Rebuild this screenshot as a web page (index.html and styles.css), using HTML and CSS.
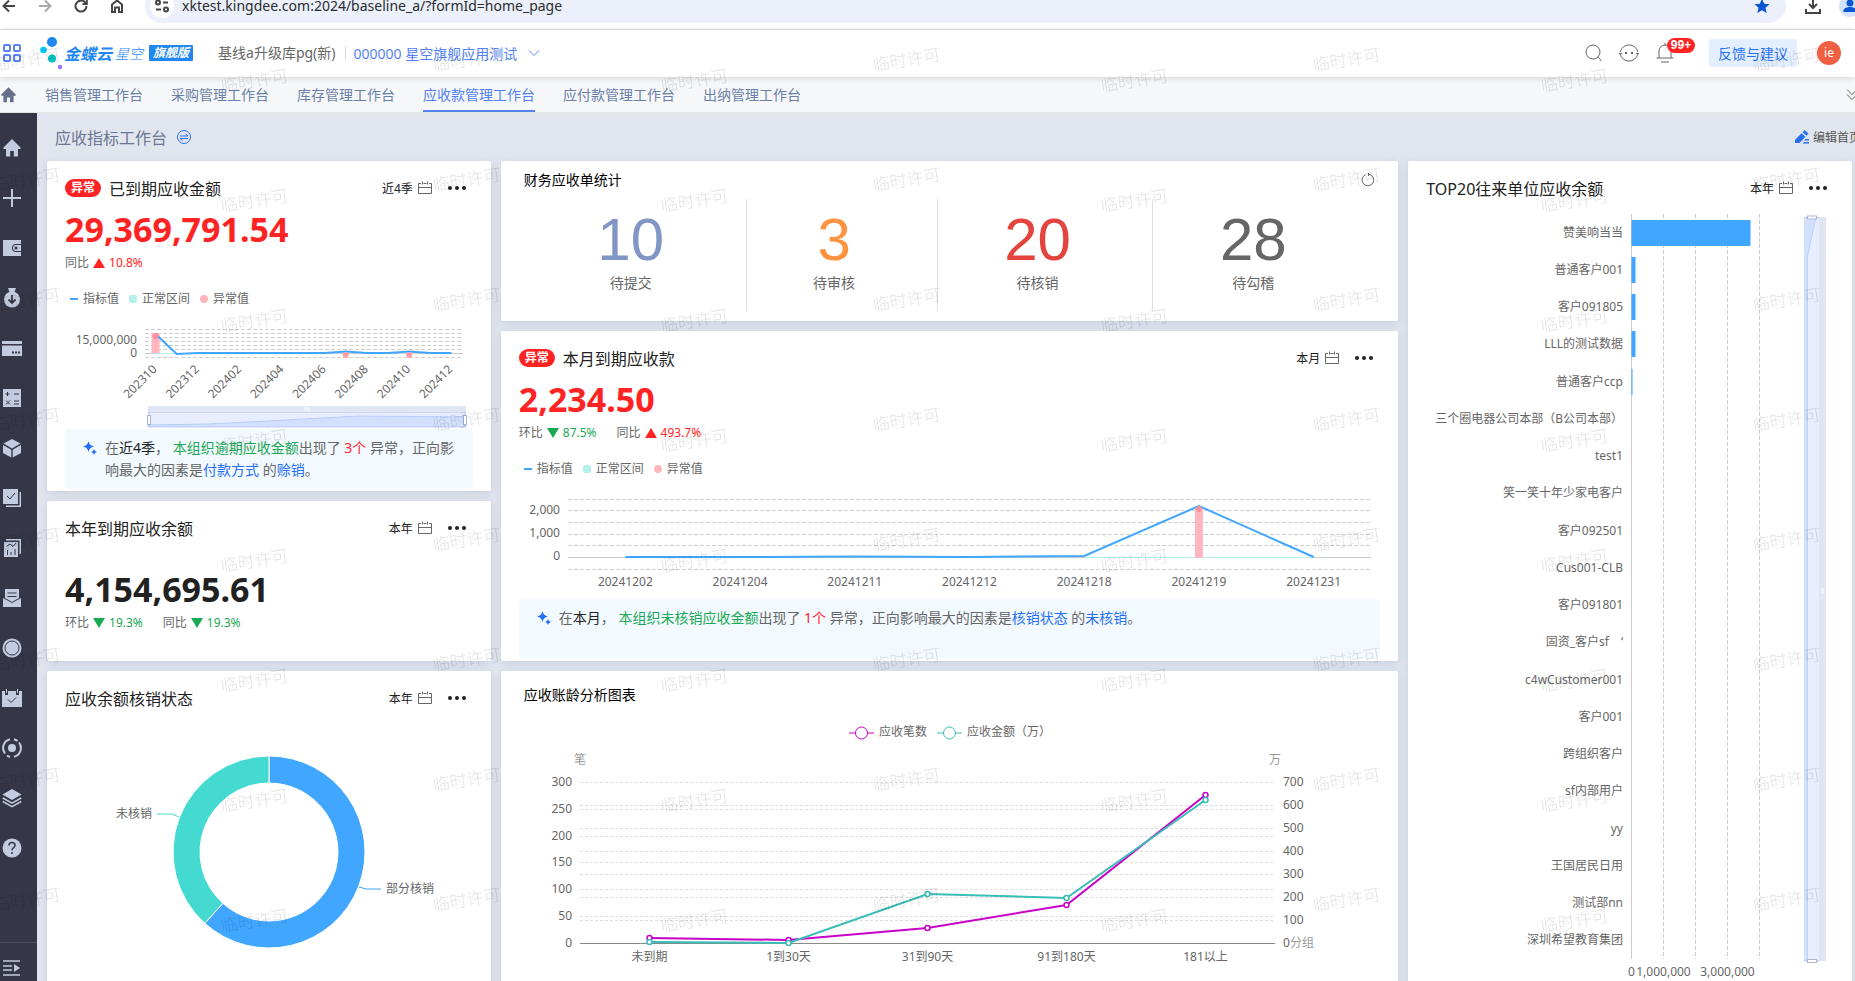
FILE: index.html
```
<!DOCTYPE html>
<html lang="zh-CN">
<head>
  <meta charset="UTF-8">
  <meta name="viewport" content="width=device-width, initial-scale=1.0">
  <title>应收指标工作台</title>
  <link rel="stylesheet" href="styles.css">
</head>
<body>

  <!-- Shared icons -->
  <svg class="sprite" aria-hidden="true">
    <symbol id="i-calendar" viewBox="0 0 14 14">
      <path d="M3 2.500H.5v10h13v-10H11M5.500 2.500h3M.5 6.500h13M4.500 .5v3M9.500 .5v3" fill="none" stroke="currentColor"/>
    </symbol>
    <symbol id="i-more" viewBox="0 0 20 6">
      <circle cx="3" cy="3" r="2"/><circle cx="10" cy="3" r="2"/><circle cx="17" cy="3" r="2"/>
    </symbol>
    <symbol id="i-spark" viewBox="0 0 14 14">
      <path d="M5.500 0Q6.300 4.700 11 5.500Q6.300 6.300 5.500 11Q4.700 6.300 0 5.500Q4.700 4.700 5.500 0zM11 8Q11.500 10.500 14 11Q11.500 11.500 11 14Q10.500 11.500 8 11Q10.500 10.500 11 8z"/>
    </symbol>
    <symbol id="i-home" viewBox="0 0 20 20">
      <path d="M10 1 1.500 9.500V11H4v7.500h4.200V13h3.600v5.500H16V11h2.500V9.500z"/>
    </symbol>
  </svg>

  <!-- Browser bar -->
  <div class="browser">
    <button class="nav-btn" aria-label="后退"><svg viewBox="0 0 16 16"><path d="M14 8H3M8 2.500 2.500 8 8 13.500"/></svg></button>
    <button class="nav-btn off" aria-label="前进"><svg viewBox="0 0 16 16"><path d="M2 8h11M8 2.500 13.500 8 8 13.500"/></svg></button>
    <button class="nav-btn" aria-label="刷新"><svg viewBox="0 0 16 16"><path d="M13.500 8A5.500 5.500 0 1 1 11.800 4.100L13.500 6M13.800 1.500V6H9.500"/></svg></button>
    <button class="nav-btn" aria-label="主页"><svg viewBox="0 0 16 16"><path d="M3 6.500 8 2.500l5 4V14h-3V9.500H6V14H3z"/></svg></button>
    <div class="omnibox">
      <span class="site-info"><svg viewBox="0 0 16 16"><circle cx="4" cy="4.500" r="2"/><path d="M9 4.500h5M2 11.500h5"/><circle cx="12" cy="11.500" r="2"/></svg></span>
      <input class="url" type="text" aria-label="地址栏" value="xktest.kingdee.com:2024/baseline_a/?formId=home_page">
      <svg class="star" viewBox="0 0 16 16"><path d="M8 .8l2.200 4.900 5.300.5-4 3.600 1.200 5.300L8 12.300l-4.700 2.800 1.200-5.300-4-3.600 5.300-.5z"/></svg>
    </div>
    <svg class="download" viewBox="0 0 18 18"><path d="M9 1v10M5 7l4 4 4-4M2 12v4h14v-4"/></svg>
    <svg class="profile" viewBox="0 0 22 22"><circle class="ring" cx="11" cy="11" r="11"/><circle cx="11" cy="8" r="3.500"/><path d="M4.500 17v-1.500c0-2.500 4-3.500 6.500-3.500s6.500 1 6.500 3.500V17z"/></svg>
  </div>

  <!-- App header -->
  <header class="header">
    <button class="apps" aria-label="应用"><svg viewBox="0 0 18 18"><rect x="1" y="1" width="6" height="6" rx="1"/><rect x="11" y="1" width="6" height="6" rx="1"/><rect x="1" y="11" width="6" height="6" rx="1"/><rect x="11" y="11" width="6" height="6" rx="1"/></svg></button>
    <a class="logo" href="#">
      <svg viewBox="0 0 24 34"><circle cx="12" cy="6" r="5" fill="#1f87f0"/><circle cx="3.500" cy="14" r="3.300" fill="#00c8f5"/><circle cx="12" cy="22.500" r="4" fill="#06bfbf"/><circle cx="20" cy="31" r="2.200" fill="#a06cff"/></svg>
      <b>金蝶云</b><i>星空</i><em><span>旗舰版</span></em>
    </a>
    <span class="org">基线a升级库pg(新)</span>
    <button class="account">000000 星空旗舰应用测试<svg viewBox="0 0 12 8"><path d="M1 1.500l5 5 5-5"/></svg></button>
    <div class="tools">
      <button aria-label="搜索"><svg viewBox="0 0 20 20"><circle cx="10" cy="9" r="7"/><path d="M15 14l3.500 4"/></svg></button>
      <button aria-label="消息"><svg viewBox="0 0 20 20"><path d="M1.200 9a9 9 0 0 1 17.600 0M18.800 11a9 9 0 0 1-17.600 0M0 10.500h3M17 10.500h3"/><path d="M6 10h2M12 10h2" stroke-width="2"/></svg></button>
      <button class="bell" aria-label="通知"><svg viewBox="0 0 20 20"><path d="M1.500 15h17M4 15V8a6 6 0 0 1 12 0v7M6 19h8M10 2V0"/></svg><span class="count">99+</span></button>
      <button class="feedback">反馈与建议</button>
      <span class="avatar">ie</span>
    </div>
  </header>

  <!-- Workbench tabs -->
  <nav class="tabs">
    <a class="tab-home" href="#" aria-label="首页"><svg viewBox="0 0 20 20"><use href="#i-home"/></svg></a>
    <a href="#">销售管理工作台</a>
    <a href="#">采购管理工作台</a>
    <a href="#">库存管理工作台</a>
    <a href="#" class="active">应收款管理工作台</a>
    <a href="#">应付款管理工作台</a>
    <a href="#">出纳管理工作台</a>
    <button class="expand" aria-label="展开"><svg viewBox="0 0 12 14"><path d="M1 1.500l5 5 5-5M1 6.500l5 5 5-5"/></svg></button>
  </nav>

  <div class="shell">
    <!-- Sidebar -->
    <aside class="sidebar">
      <button aria-label="首页"><svg viewBox="0 0 20 20"><use href="#i-home"/></svg></button>
      <button aria-label="新增"><svg viewBox="0 0 20 20"><path class="ln" d="M10 1v18M1 10h18" stroke-width="2"/></svg></button>
      <button aria-label="钱包"><svg viewBox="0 0 20 20"><path d="M1 2h18v4h-5a4 4 0 0 0 0 8h5v4H1z"/><path d="M14 7h5v6h-5a3 3 0 0 1 0-6z"/><circle class="bg" cx="14" cy="10" r="1.500"/></svg></button>
      <button aria-label="资金"><svg viewBox="0 0 20 20"><path d="M6 0h8l-1.500 4h-5z"/><circle cx="10" cy="11.500" r="8"/><path class="cut" d="M10 7v8M6.500 11.500l3.500 3.500 3.500-3.500" stroke-width="1.800"/></svg></button>
      <button aria-label="银行卡"><svg viewBox="0 0 20 20"><path d="M0 3h20v3H0zM0 7.500h20V18H0z"/><path class="cut" d="M10 14.500h2M13 14.500h2M16 14.500h2" stroke-width="2"/></svg></button>
      <button aria-label="核算"><svg viewBox="0 0 20 20"><path d="M1 1h18v18H1z"/><path class="cut" d="M3.500 6h4M5.500 4v4M12 6h5M4 12.500l4 4M8 12.500l-4 4M12 13h5M12 16h5"/></svg></button>
      <button aria-label="存货"><svg viewBox="0 0 20 20"><path d="M10 1l8.500 4.500L10 10.500 1.500 5.500zM1 7l8.300 4.700V19.500L1 15zM19 7l-8.300 4.700V19.500L19 15z"/></svg></button>
      <button aria-label="审批"><svg viewBox="0 0 20 20"><path d="M1 1h15v15H1zM17.500 4H19v15H4v-1.500h13.500z"/><path class="cut" d="M5 8l3 3 5-6"/></svg></button>
      <button aria-label="报表"><svg viewBox="0 0 20 20"><path d="M2 4h14v15H2zM4 1h15v15h-1.500V2.500H4z"/><path class="cut" d="M4.500 8.500L8 6l3 2.500L14 5M5.500 17v-5M9 17v-3M13 17v-6"/></svg></button>
      <button aria-label="单据"><svg viewBox="0 0 20 20"><path d="M3 1h14v9l-7 4-7-4zM1 10l9 5 9-5v9H1z"/><path class="cut" d="M5.500 5h9M5.500 8.500h9"/></svg></button>
      <button aria-label="预算"><svg viewBox="0 0 20 20"><circle cx="10" cy="10" r="9.500"/><circle class="cut" cx="10" cy="10" r="7"/></svg></button>
      <button aria-label="日程"><svg viewBox="0 0 20 20"><path d="M0 3h3v4h3V3h8v4h3V3h3v16H0zM4 1h1v4H4zM15 1h1v4h-1z"/><path class="cut" d="M6 11.500l3 3 5-5"/></svg></button>
      <button aria-label="流程"><svg viewBox="0 0 20 20"><circle cx="10" cy="10" r="4"/><path class="ln" d="M8 1.200A9 9 0 0 0 3 15.500M5 17.500A9 9 0 0 0 8 18.800M12 1.200A9 9 0 0 1 15.500 3M12 18.800A9 9 0 0 0 17 4.500" stroke-width="2"/></svg></button>
      <button aria-label="模块"><svg viewBox="0 0 20 20"><path d="M10 1l9.500 5.500L10 12 .5 6.500z"/><path class="ln" d="M.8 10l9.200 5.200L19.200 10M.8 13.500l9.200 5.200 9.200-5.200" stroke-width="1.500"/></svg></button>
      <button aria-label="帮助"><svg viewBox="0 0 20 20"><circle cx="10" cy="10" r="9.500"/><path class="cut" d="M7 7.500c0-4 6-4 6 0 0 2-3 2.300-3 4.800M10 14v2" stroke-width="1.500"/></svg></button>
      <button class="unfold" aria-label="展开菜单"><svg viewBox="0 0 20 20"><path class="ln" d="M1 3h17M1 8h9M1 12h9M1 17h17" stroke-width="1.500"/><path d="M12 6l6 4-6 4z"/></svg></button>
    </aside>

    <main class="content">
      <div class="page-title">
        <h1>应收指标工作台</h1>
        <svg class="switch" viewBox="0 0 16 16"><circle cx="8" cy="8" r="6.500"/><path d="M4 7h8L9.500 5M12 9.500H4L6.500 11.500"/></svg>
        <button class="edit"><svg viewBox="0 0 14 14"><path d="M9.500 0l4 3.500-2 2.200-4-3.500zM6.500 3.200l4 3.500L4.500 13H0V10zM9 12h5v1.500H7.500zM10.500 9H14v1.500H9z"/></svg>编辑首页</button>
      </div>

      <div class="grid">
        <!-- Overdue receivables -->
        <section class="card tall">
          <div class="card-head">
            <span class="badge">异常</span><h2>已到期应收金额</h2>
            <button class="period">近4季<svg><use href="#i-calendar"/></svg></button>
            <button class="more" aria-label="更多"><svg><use href="#i-more"/></svg></button>
          </div>
          <p class="figure red">29,369,791.54</p>
          <p class="ratio"><span>同比 <i class="up"></i><b class="red">10.8%</b></span></p>
          <ul class="legend"><li class="line">指标值</li><li class="range">正常区间</li><li class="bad">异常值</li></ul>
          <div class="chart" id="quarterChart"></div>
          <div class="insight">
            <svg><use href="#i-spark"/></svg>
            <p>在<b>近4季</b>， <span class="green">本组织逾期应收金额</span>出现了 <span class="red">3个</span> 异常，正向影响最大的因素是<a href="#">付款方式</a> 的<a href="#">赊销</a>。</p>
          </div>
        </section>

        <!-- Bill counts -->
        <section class="card wide">
          <div class="plain-head"><h3>财务应收单统计</h3><button class="refresh" aria-label="刷新"><svg viewBox="0 0 14 14"><path d="M4.500 1.700A5.800 5.800 0 1 0 8 1.300M7.500 0v3"/></svg></button></div>
          <ul class="stats">
            <li><strong class="c1">10</strong>待提交</li>
            <li><strong class="c2">3</strong>待审核</li>
            <li><strong class="c3">20</strong>待核销</li>
            <li><strong class="c4">28</strong>待勾稽</li>
          </ul>
        </section>

        <!-- Top 20 -->
        <section class="card side">
          <div class="card-head">
            <h2>TOP20往来单位应收余额</h2>
            <button class="period">本年<svg><use href="#i-calendar"/></svg></button>
            <button class="more" aria-label="更多"><svg><use href="#i-more"/></svg></button>
          </div>
          <div class="chart" id="topChart"></div>
        </section>

        <!-- Due this month -->
        <section class="card wide tall">
          <div class="card-head">
            <span class="badge">异常</span><h2>本月到期应收款</h2>
            <button class="period">本月<svg><use href="#i-calendar"/></svg></button>
            <button class="more" aria-label="更多"><svg><use href="#i-more"/></svg></button>
          </div>
          <p class="figure red">2,234.50</p>
          <p class="ratio"><span>环比 <i class="down"></i><b class="green">87.5%</b></span><span>同比 <i class="up"></i><b class="red">493.7%</b></span></p>
          <ul class="legend"><li class="line">指标值</li><li class="range">正常区间</li><li class="bad">异常值</li></ul>
          <div class="chart" id="monthChart"></div>
          <div class="insight">
            <svg><use href="#i-spark"/></svg>
            <p>在<b>本月</b>， <span class="green">本组织未核销应收金额</span>出现了 <span class="red">1个</span> 异常，正向影响最大的因素是<a href="#">核销状态</a> 的<a href="#">未核销</a>。</p>
          </div>
        </section>

        <!-- Due this year -->
        <section class="card">
          <div class="card-head">
            <h2>本年到期应收余额</h2>
            <button class="period">本年<svg><use href="#i-calendar"/></svg></button>
            <button class="more" aria-label="更多"><svg><use href="#i-more"/></svg></button>
          </div>
          <p class="figure spaced">4,154,695.61</p>
          <p class="ratio"><span>环比 <i class="down"></i><b class="green">19.3%</b></span><span>同比 <i class="down"></i><b class="green">19.3%</b></span></p>
        </section>

        <!-- Write-off status -->
        <section class="card tall">
          <div class="card-head">
            <h2>应收余额核销状态</h2>
            <button class="period">本年<svg><use href="#i-calendar"/></svg></button>
            <button class="more" aria-label="更多"><svg><use href="#i-more"/></svg></button>
          </div>
          <div class="chart" id="statusChart"></div>
        </section>

        <!-- Aging -->
        <section class="card wide tall">
          <div class="plain-head low"><h3>应收账龄分析图表</h3></div>
          <div class="chart" id="agingChart"></div>
        </section>
      </div>
    </main>
  </div>

  <!-- Licence watermark -->
  <svg class="watermark" aria-hidden="true">
    <defs>
      <pattern id="mark" x="-10" y="40" width="440" height="120" patternUnits="userSpaceOnUse">
        <text transform="translate(4 31) rotate(-9)">临时许可</text>
        <text transform="translate(232 52) rotate(-9)">临时许可</text>
      </pattern>
    </defs>
    <rect y="40" width="100%" height="100%" fill="url(#mark)"/>
  </svg>

  <script src="script.js"></script>
</body>
</html>
```
FILE: styles.css
```
* {
  box-sizing: border-box;
}

body {
  margin: 0;
  height: 100vh;
  overflow: hidden;
  display: flex;
  flex-direction: column;
  background: #e1e5ee;
  color: #666;
  font-family: "Noto Sans", "Noto Sans CJK SC", sans-serif;
  font-size: 12px;
}

h1, h2, h3, p, ul {
  margin: 0;
  padding: 0;
  font-weight: normal;
  list-style: none;
}

button {
  border: none;
  background: none;
  padding: 0;
  color: inherit;
  font: inherit;
  cursor: pointer;
}

a {
  color: inherit;
  text-decoration: none;
}

svg {
  display: block;
  flex: none;
}

.sprite {
  display: none;
}

.red { color: #ff2424; }
.green { color: #1ba854; }

/* Browser bar */
.browser {
  flex: none;
  height: 30px;
  display: flex;
  align-items: center;
  overflow: hidden;
  padding: 0 0 18px 1px;
  background: #fff;
  border-bottom: 1px solid #dcdfe2;
}

.nav-btn {
  margin-right: 20px;
}

.nav-btn svg, .site-info svg {
  width: 16px;
  height: 16px;
  fill: none;
  stroke: #444;
  stroke-width: 2;
}

.nav-btn.off svg {
  stroke: #aaa;
}

.omnibox {
  flex: 1;
  height: 34px;
  display: flex;
  align-items: center;
  padding: 0 16px 0 5px;
  margin-right: 18px;
  border-radius: 17px;
  background: #ecf0fa;
}

.site-info {
  width: 24px;
  height: 24px;
  padding: 4px;
  border-radius: 50%;
  background: #fff;
}

.url {
  flex: 1;
  margin-left: 8px;
  padding: 0;
  border: none;
  outline: none;
  background: none;
  color: #2b2c2f;
  font-family: "Noto Sans", sans-serif;
  font-size: 14px;
}

.star {
  width: 16px;
  height: 16px;
  fill: #0b57d0;
}

.download {
  width: 18px;
  height: 18px;
  margin-right: 17px;
  fill: none;
  stroke: #444;
  stroke-width: 2;
}

.profile {
  width: 22px;
  height: 22px;
  margin-right: -6px;
  fill: #0b57d0;
}

.profile .ring {
  fill: #d3e3fd;
}

/* Header */
.header {
  flex: none;
  height: 47px;
  display: flex;
  align-items: center;
  padding: 0 14px 1px 3px;
  background: #fff;
  font-size: 14px;
  box-shadow: 0 1px 6px rgba(0, 0, 0, 0.15);
  position: relative;
  z-index: 1;
}

.apps svg {
  width: 18px;
  height: 18px;
  fill: none;
  stroke: #5a82f5;
  stroke-width: 2;
}

.logo {
  display: flex;
  align-items: center;
  margin-left: 19px;
  color: #1f87f0;
  font-size: 16px;
}

.logo svg {
  width: 24px;
  height: 34px;
}

.logo b {
  font-style: italic;
}

.logo i {
  margin: 0 6px 0 3px;
  font-size: 14px;
  font-weight: 300;
}

.logo em {
  padding: 0 4px;
  border-radius: 1px;
  background: #1f87f0;
  color: #fff;
  font-size: 12px;
  font-weight: bold;
  line-height: 16px;
}

.org {
  margin-left: 25px;
  padding-right: 9px;
  border-right: 1px solid #d5d8de;
  line-height: 14px;
}

.account {
  display: flex;
  align-items: center;
  gap: 11px;
  margin-left: 8px;
  color: #5582f3;
}

.account svg {
  width: 12px;
  height: 8px;
  fill: none;
  stroke: #5582f3;
}

.tools {
  display: flex;
  align-items: center;
  margin-left: auto;
}

.tools svg {
  width: 20px;
  height: 20px;
  margin-right: 16px;
  fill: none;
  stroke: #666;
}

.bell {
  position: relative;
}

.count {
  position: absolute;
  top: -5px;
  left: 12px;
  width: 28px;
  border-radius: 8px;
  background: #ff2424;
  color: #fff;
  font-family: "Liberation Sans", sans-serif;
  font-weight: bold;
  font-size: 12px;
  line-height: 15px;
}

.feedback {
  height: 28px;
  margin-left: 18px;
  padding: 0 9px;
  border-radius: 3px;
  background: #e3efff;
  color: #276ff5;
}

.avatar {
  width: 24px;
  height: 24px;
  margin-left: 20px;
  border-radius: 50%;
  background: #f06143;
  color: #fff;
  font-size: 12px;
  line-height: 24px;
  text-align: center;
}

/* Tabs */
.tabs {
  flex: none;
  height: 36px;
  display: flex;
  align-items: stretch;
  gap: 28px;
  overflow: hidden;
  background: #f6f7f9;
  border-bottom: 1px solid #e3e4e6;
  color: #6b7fa8;
  font-size: 14px;
  line-height: 36px;
}

.tab-home svg {
  width: 17px;
  height: 36px;
  fill: #67708a;
}

.tabs .active {
  color: #5582f3;
  border-bottom: 2px solid #5582f3;
}

.expand {
  margin-left: auto;
  margin-right: -3px;
}

.expand svg {
  width: 12px;
  height: 14px;
  fill: none;
  stroke: #666;
}

/* Sidebar */
.shell {
  flex: 1;
  display: flex;
  min-height: 0;
}

.sidebar {
  flex: none;
  width: 37px;
  display: flex;
  flex-direction: column;
  padding-top: 10px;
  background: #353748;
}

.sidebar button {
  height: 50px;
  padding-left: 2px;
}

.sidebar svg {
  width: 20px;
  height: 20px;
  fill: #c3cbe0;
}

.sidebar .ln {
  fill: none;
  stroke: #c3cbe0;
}

.sidebar .cut {
  fill: none;
  stroke: #353748;
}

.sidebar .bg {
  fill: #353748;
}

.sidebar .unfold {
  height: 39px;
  margin-top: auto;
  border-top: 1px solid #4a4d61;
}

.unfold svg {
  margin-top: 12px;
}

/* Content */
.content {
  flex: 1;
  min-width: 0;
  overflow: hidden;
  padding: 0 3px 0 10px;
}

.page-title {
  height: 48px;
  display: flex;
  align-items: center;
  padding-left: 8px;
  color: #6b7690;
}

.page-title h1 {
  font-size: 16px;
}

.switch {
  width: 16px;
  height: 16px;
  margin-left: 9px;
  fill: none;
  stroke: #276ff5;
}

.edit {
  display: flex;
  align-items: center;
  gap: 4px;
  margin: 0 -9px 0 auto;
  color: #555;
}

.edit svg {
  width: 14px;
  height: 14px;
  fill: #276ff5;
}

.grid {
  display: grid;
  grid-template-columns: repeat(12, 1fr);
  grid-auto-rows: 160px;
  gap: 10px;
}

.card {
  grid-column: span 3;
  min-width: 0;
  display: flex;
  flex-direction: column;
  padding: 13px 18px 2px;
  border-radius: 2px;
  background: #fff;
  box-shadow: 0 2px 8px rgba(90, 110, 160, 0.2);
}

.wide { grid-column: 4 / span 6; }
.tall { grid-row: span 2; }
.side { grid-column: 10 / span 3; grid-row: 1 / span 5; }

.card-head {
  height: 28px;
  display: flex;
  align-items: center;
  color: #212121;
}

.card-head h2 {
  font-size: 16px;
}

.badge {
  margin-right: 8px;
  padding: 0 6px;
  border-radius: 9px;
  background: #ff2424;
  color: #fff;
  font-weight: bold;
  line-height: 18px;
}

.period {
  display: flex;
  align-items: center;
  gap: 5px;
  margin-left: auto;
}

.period svg {
  width: 14px;
  height: 14px;
  color: #666;
}

.more {
  margin: 0 6px 0 15px;
}

.more svg {
  width: 20px;
  height: 6px;
  fill: #212121;
}

.figure {
  margin: 9px 0 6px;
  font-size: 34px;
  font-weight: bold;
  line-height: 36px;
}

.figure.spaced {
  margin-top: 29px;
  color: #212121;
}

.ratio {
  display: flex;
  gap: 20px;
  line-height: 20px;
}

.ratio span {
  display: flex;
  align-items: center;
  gap: 4px;
}

.ratio b {
  font-weight: normal;
}

.up, .down {
  border: 6px solid transparent;
}

.up {
  border-bottom: 10px solid #ff2424;
  border-top: 0;
}

.down {
  border-top: 10px solid #1ba854;
  border-bottom: 0;
}

.legend {
  display: flex;
  gap: 10px;
  margin-top: 16px;
  padding-left: 5px;
  line-height: 20px;
}

.legend li {
  display: flex;
  align-items: center;
  gap: 5px;
}

.legend li::before {
  content: "";
  width: 8px;
  height: 8px;
}

.legend .line::before {
  height: 2px;
  background: #40a6ff;
}

.legend .range::before {
  border-radius: 2px;
  background: #b5f0eb;
}

.legend .bad::before {
  border-radius: 50%;
  background: #ffb6bd;
}

.chart {
  flex: 1;
  min-height: 0;
  overflow: hidden;
}

.chart text {
  fill: #666;
}

.chart .faint {
  fill: #999;
}

.insight {
  height: 60px;
  display: flex;
  gap: 8px;
  padding: 8px 14px 8px 18px;
  border-radius: 4px;
  background: #f2f9ff;
  font-size: 14px;
  line-height: 22px;
}

.insight svg {
  width: 14px;
  height: 14px;
  margin-top: 4px;
  fill: #276ff5;
}

.insight b {
  color: #212121;
  font-weight: normal;
}

.insight a {
  color: #276ff5;
}

/* Plain cards */
.plain-head {
  display: flex;
  justify-content: space-between;
  height: 20px;
  margin: -4px 5px 0;
  color: #000;
  line-height: 20px;
}

.plain-head.low {
  margin-top: 1px;
}

.plain-head h3 {
  font-size: 14px;
}

.refresh svg {
  width: 14px;
  height: 14px;
  fill: none;
  stroke: #666;
}

.stats {
  display: flex;
  margin-top: 9px;
  padding: 0 27px 0 12px;
  height: 112px;
}

.stats li {
  flex: 1 1 auto;
  display: flex;
  flex-direction: column;
  align-items: center;
  margin-right: 15px;
  font-size: 14px;
  line-height: 20px;
}

.stats li + li {
  border-left: 1px solid #e0e0e0;
}

.stats li:last-child {
  margin-right: 0;
}

.stats strong {
  margin: 11px 0 3px;
  font: 60px/60px "Liberation Sans", sans-serif;
}

.c1 { color: #8196c4; }
.c2 { color: #ff9340; }
.c3 { color: #e3453e; }
.c4 { color: #666; }

/* Watermark */
.watermark {
  position: fixed;
  top: 0;
  left: 0;
  width: 100%;
  height: 100%;
  z-index: 5;
  pointer-events: none;
}

.watermark text {
  fill: rgba(0, 0, 0, 0.12);
  font-size: 17px;
  font-weight: 300;
}
```
FILE: script.js
```
const BLUE = "#40a6ff";
const TEAL = "#45dad1";
const PINK = "#ffb6bd";

// Small SVG string helpers
function line(x1, y1, x2, y2, stroke, extra = "") {
  return `<line x1="${x1}" y1="${y1}" x2="${x2}" y2="${y2}" stroke="${stroke}" ${extra}/>`;
}

function rect(x, y, w, h, fill, extra = "") {
  return `<rect x="${x}" y="${y}" width="${w}" height="${h}" fill="${fill}" ${extra}/>`;
}

function label(x, y, text, anchor = "middle", extra = "") {
  return `<text x="${x}" y="${y + 4}" text-anchor="${anchor}" ${extra}>${text}</text>`;
}

function path(points, stroke) {
  return `<polyline points="${points.map(p => p.join()).join(" ")}" fill="none" stroke="${stroke}" stroke-width="2"/>`;
}

function draw(id, build) {
  const box = document.getElementById(id);
  const w = Math.round(box.clientWidth);
  const h = box.clientHeight;
  box.innerHTML = `<svg width="${w}" height="${h}" viewBox="0 0 ${w} ${h}">${build(w, h)}</svg>`;
}

const DASH = 'stroke-dasharray="4 2"';

function quarterChart(w) {
  const left = 80, right = w - 11, axis = 44.5;
  const step = (right - left) / 15;
  const x = i => left + step * (i + 0.5);
  let out = "";
  [20.5, 24.5, 28.5, 32.5, 36.5, 40.5, 48.5].forEach(y => out += line(left, y, right, y, "#d0d0d0", DASH));
  out += line(left, axis, right + 1, axis, "#ccc");
  out += label(72, 31, "15,000,000", "end") + label(72, 44, "0", "end");
  out += line(x(0), axis, x(1), axis, "#b5f0eb");
  out += rect(x(0) - 4, 24, 8, 20, PINK);
  const y = [25, 45, 44, 44, 44, 44, 44, 44, 44, 42.5, 44, 44, 42.5, 44, 44];
  out += path(y.map((v, i) => [x(i), v]), BLUE);
  out += `<circle cx="${x(0)}" cy="27" r="3" fill="#ff8f9c"/>`;
  [9, 12].forEach(i => out += `<circle cx="${x(i)}" cy="46" r="3" fill="#ff9daa"/>`);
  ["202310", "202312", "202402", "202404", "202406", "202408", "202410", "202412"].forEach((t, i) => {
    out += `<text transform="translate(${x(i * 2) + 2} 61) rotate(-45)" text-anchor="end">${t}</text>`;
  });
  // Zoom slider
  const s = 83, e = w - 7;
  out += rect(s, 97, e - s, 7, "#dfe5f2") + rect(s, 104, e - s, 14, "#e8eeff");
  out += `<path d="M${s} 116L${s + 60} 115L${s + 120} 112L${s + 210} 107L${e} 108V118H${s}z" fill="#d3e0fd" stroke="#b9cdf9"/>`;
  out += line(s, 103.5, e, 103.5, "#cdd8ee");
  [-2, 0, 2].forEach(d => out += line((s + e) / 2 + d, 98, (s + e) / 2 + d, 102, "#fff"));
  [s + 1, e - 1].forEach(v => out += line(v, 103, v, 118, "#b5c4e2") + rect(v - 1.5, 106.5, 3, 9, "#fff", 'stroke="#a9b6d3"'));
  return out;
}

function monthChart(w) {
  const left = 49, right = w - 10;
  const step = (right - left) / 7;
  const x = i => left + step * (i + 0.5);
  let out = "";
  [20.5, 31.5, 43.5, 55.5, 66.5, 90.5].forEach(y => out += line(left, y, right, y, "#d0d0d0", DASH));
  out += line(left, 78.5, right, 78.5, "#ccc");
  out += line(x(4), 78.5, x(6), 78.5, "#b5f0eb");
  out += label(41, 31, "2,000", "end") + label(41, 54, "1,000", "end") + label(41, 77, "0", "end");
  ["20241202", "20241204", "20241211", "20241212", "20241218", "20241219", "20241231"].forEach((t, i) => {
    out += label(x(i), 103, t);
  });
  out += path([78, 78, 77.5, 78, 77, 27, 78].map((v, i) => [x(i), v]), BLUE);
  out += rect(x(5) - 4, 30, 8, 49, PINK);
  out += `<circle cx="${x(5)}" cy="30" r="3" fill="#ff8f9c"/>`;
  return out;
}

function topChart(w) {
  const names = ["赞美响当当", "普通客户001", "客户091805", "LLL的测试数据", "普通客户ccp", "三个圈电器公司本部（B公司本部）", "test1",
    "笑一笑十年少家电客户", "客户092501", "Cus001-CLB", "客户091801", "固资_客户sf&#12288;‘", "c4wCustomer001", "客户001",
    "跨组织客户", "sf内部用户", "yy", "王国居民日用", "测试部nn", "深圳希望教育集团"];
  const bars = [119, 4, 4, 4, 1];
  const left = 205.5, top = 12, bottom = 757;
  const step = (bottom - top) / 20;
  let out = "";
  [1, 2, 3, 4].forEach(i => out += line(left + i * 32, top, left + i * 32, bottom, "#ccc", DASH));
  out += line(left, top, left, bottom, "#ccc");
  names.forEach((name, i) => {
    const y = Math.round(top + step * (i + 0.5));
    out += label(197, y, name, "end");
    if (bars[i]) out += rect(left, y - 13, bars[i], 26, BLUE);
  });
  out += label(left, 770, "0") + label(left + 32, 770, "1,000,000") + label(left + 96, 770, "3,000,000");
  // Zoom slider
  const s = w - 30;
  out += rect(s, 15, 15, 744, "#e8eeff") + rect(s + 15, 15, 7, 744, "#dfe5f2");
  out += `<path d="M${s} 15H${s + 12}L${s + 4} 54V759H${s}z" fill="#d3e0fd"/><path d="M${s + 12} 15L${s + 3.5} 54V759" fill="none" stroke="#b9d3fb"/>`;
  [387, 389, 391].forEach(y => out += line(s + 17, y, s + 20, y, "#fff"));
  [15.5, 759].forEach(y => out += line(s, y, s + 15, y, "#b5c4e2") + rect(s + 3.5, y - 1.5, 9, 3, "#fff", 'stroke="#a9b6d3"'));
  return out;
}

function statusChart(w) {
  const cx = w / 2, cy = 140, R = 96, r = 69;
  const at = (deg, rad) => [cx + rad * Math.sin(deg * Math.PI / 180), cy - rad * Math.cos(deg * Math.PI / 180)];
  const slice = (a, b, fill) => {
    const big = b - a > 180 ? 1 : 0;
    return `<path d="M${at(a, R)}A${R} ${R} 0 ${big} 1 ${at(b, R)}L${at(b, r)}A${r} ${r} 0 ${big} 0 ${at(a, r)}z" fill="${fill}" stroke="#fff"/>`;
  };
  let out = slice(0, 222, BLUE) + slice(222, 360, TEAL);
  out += `<path d="M${cx - 90} 105L${cx - 97} 102H${cx - 112}" fill="none" stroke="${TEAL}"/>`;
  out += `<path d="M${cx + 90} 175L${cx + 97} 177H${cx + 112}" fill="none" stroke="${BLUE}"/>`;
  out += label(cx - 117, 102, "未核销", "end") + label(cx + 117, 177, "部分核销", "start");
  return out;
}

function agingChart(w) {
  const left = 61, right = w - 106, top = 78, axis = 238.5;
  const step = (right - left) / 5;
  const x = i => left + step * (i + 0.5);
  const mid = w / 2;
  let out = "";
  const series = (ys, color) => {
    out += path(ys.map((v, i) => [x(i), v]), color);
    ys.forEach((v, i) => out += `<circle cx="${x(i)}" cy="${v}" r="2.500" fill="#fff" stroke="${color}" stroke-width="1.500"/>`);
  };
  for (let i = 0; i <= 6; i++) {
    const y = Math.round(axis - (axis - top) * i / 6) - 0.5;
    if (i) out += line(left, y, right, y, "#ddd", 'stroke-dasharray="3 2"');
    out += label(left - 8, y - 1, i * 50, "end");
  }
  for (let i = 0; i <= 7; i++) {
    const y = Math.round(axis - (axis - top) * i / 7) - 0.5;
    if (i && i < 7) out += line(left, y, right, y, "#ddd", 'stroke-dasharray="3 2"');
    out += label(right + 8, y - 1, i * 100, "start");
  }
  out += line(left, axis, right, axis, "#888");
  out += label(left, 55, "笔", "middle", 'class="faint"') + label(right, 55, "万", "middle", 'class="faint"');
  out += label(right + 15, 238, "分组", "start", 'class="faint"');
  ["未到期", "1到30天", "31到90天", "91到180天", "181以上"].forEach((t, i) => out += label(x(i), 252, t));
  series([233, 235, 223, 200, 90], "#c800c8");
  series([237, 238, 189, 193, 95], "#3bbdb7");
  // Legend
  [[mid - 101, "#c800c8", "应收笔数"], [mid - 13, "#3bbdb7", "应收金额（万）"]].forEach(([lx, color, t]) => {
    out += line(lx, 28, lx + 25, 28, color) + `<circle cx="${lx + 12.5}" cy="28" r="6" fill="#fff" stroke="${color}"/>`;
    out += label(lx + 30, 27, t, "start");
  });
  return out;
}

function drawAll() {
  draw("quarterChart", quarterChart);
  draw("monthChart", monthChart);
  draw("topChart", topChart);
  draw("statusChart", statusChart);
  draw("agingChart", agingChart);
}

drawAll();
window.addEventListener("resize", drawAll);
```
